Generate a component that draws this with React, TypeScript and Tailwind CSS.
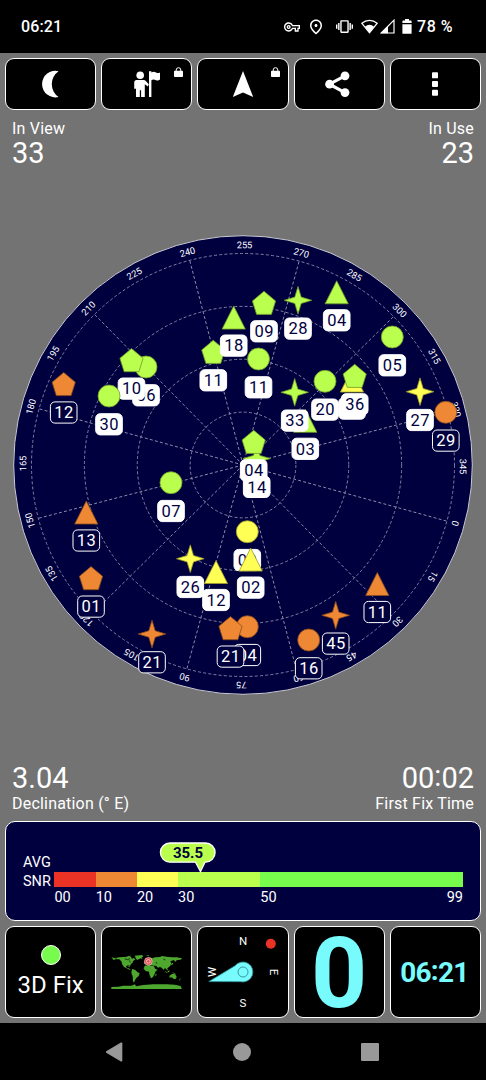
import type { ReactNode } from "react";
import { MdOutlinePlace, MdOutlineVpnKey, MdVibration } from "react-icons/md";

type Shape = "circle" | "pentagon" | "triangle" | "star";
type Tone = "lime" | "yellow" | "orange";

type Satellite = {
  id: string;
  shape: Shape;
  tone: Tone;
  x: number;
  y: number;
};

const CX = 243;
const CY = 240;
const RING = 211.5;

const TONES: Record<Tone, { fill: string; stroke: string }> = {
  lime: { fill: "#bbff4e", stroke: "#6f9a2a" },
  yellow: { fill: "#ffff55", stroke: "#9c9a2c" },
  orange: { fill: "#ee8834", stroke: "#8a4d1b" },
};

// painted in order, later ones cover earlier ones
const satellites: Satellite[] = [
  { id: "16", shape: "circle", tone: "orange", x: 308.7, y: 415 },
  { id: "45", shape: "star", tone: "orange", x: 335.7, y: 390.3 },
  { id: "11", shape: "triangle", tone: "orange", x: 377.3, y: 358.7 },
  { id: "04", shape: "circle", tone: "orange", x: 247.3, y: 401.7 },
  { id: "21", shape: "pentagon", tone: "orange", x: 230.5, y: 403.3 },
  { id: "21", shape: "star", tone: "orange", x: 152, y: 409 },
  { id: "01", shape: "pentagon", tone: "orange", x: 91, y: 353.3 },
  { id: "13", shape: "triangle", tone: "orange", x: 86.3, y: 287.2 },
  { id: "12", shape: "pentagon", tone: "orange", x: 63.7, y: 159.2 },
  { id: "29", shape: "circle", tone: "orange", x: 445.8, y: 187.3 },
  { id: "09", shape: "circle", tone: "yellow", x: 247.3, y: 306.7 },
  { id: "02", shape: "triangle", tone: "yellow", x: 250.7, y: 334.3 },
  { id: "26", shape: "star", tone: "yellow", x: 190.3, y: 333.7 },
  { id: "12", shape: "triangle", tone: "yellow", x: 216, y: 346.7 },
  { id: "27", shape: "star", tone: "yellow", x: 420, y: 166.7 },
  { id: "13", shape: "triangle", tone: "yellow", x: 352, y: 155.3 },
  { id: "36", shape: "pentagon", tone: "lime", x: 354.7, y: 151 },
  { id: "20", shape: "circle", tone: "lime", x: 325, y: 156.3 },
  { id: "03", shape: "triangle", tone: "lime", x: 305.3, y: 195.5 },
  { id: "33", shape: "star", tone: "lime", x: 294.7, y: 167.3 },
  { id: "05", shape: "circle", tone: "lime", x: 392.3, y: 112 },
  { id: "04", shape: "triangle", tone: "lime", x: 336.7, y: 67 },
  { id: "28", shape: "star", tone: "lime", x: 298, y: 75.3 },
  { id: "09", shape: "pentagon", tone: "lime", x: 264, y: 78 },
  { id: "11", shape: "circle", tone: "lime", x: 258.5, y: 134 },
  { id: "11", shape: "pentagon", tone: "lime", x: 213.3, y: 127 },
  { id: "18", shape: "triangle", tone: "lime", x: 233.7, y: 92.3 },
  { id: "06", shape: "circle", tone: "lime", x: 146, y: 142 },
  { id: "10", shape: "pentagon", tone: "lime", x: 131.5, y: 135.3 },
  { id: "30", shape: "circle", tone: "lime", x: 109, y: 171 },
  { id: "07", shape: "circle", tone: "lime", x: 171, y: 257.7 },
  { id: "14", shape: "star", tone: "lime", x: 256.7, y: 233.6 },
  { id: "04", shape: "pentagon", tone: "lime", x: 253.7, y: 217 },
];

const azimuths = Array.from({ length: 24 }, (_, i) => i * 15);

function Marker({ shape, tone }: { shape: Shape; tone: Tone }) {
  const paint = { ...TONES[tone], strokeWidth: 0.8 };
  if (shape === "circle") return <circle r="11" {...paint} />;
  if (shape === "pentagon") {
    return <path d="M0 -11.7 L11.6 -2 L7.4 11.4 H-7.4 L-11.6 -2 Z" {...paint} />;
  }
  if (shape === "triangle") {
    return <path d="M0 -11.2 L11.6 11.8 H-11.6 Z" {...paint} />;
  }
  return (
    <path
      d="M0 -13.8 L3.2 -3.2 L13.8 0 L3.2 3.2 L0 13.8 L-3.2 3.2 L-13.8 0 L-3.2 -3.2 Z"
      {...paint}
    />
  );
}

function SkyPlot() {
  return (
    <svg viewBox="0 0 486 480" className="block h-[480px] w-[486px]">
      <circle cx={CX} cy={CY} r="229.3" fill="#00003f" stroke="#c9c9d2" strokeWidth="1" />
      <g fill="none" stroke="#8d8dac" strokeWidth="0.9" strokeDasharray="3 2.2">
        {[1, 2, 3, 4].map((n) => (
          <circle key={n} cx={CX} cy={CY} r={(RING * n) / 4} />
        ))}
        {azimuths
          .filter((a) => a % 30 === 0)
          .map((a) => (
            <line
              key={a}
              x1={CX}
              y1={CY}
              x2={CX}
              y2={CY - RING}
              transform={`rotate(${a - 254.6} ${CX} ${CY})`}
            />
          ))}
      </g>
      <g fill="#ffffff" fontSize="9.3" textAnchor="middle">
        {azimuths.map((a) => (
          <text key={a} x={CX} y={CY - 216.8} transform={`rotate(${a - 254.6} ${CX} ${CY})`}>
            {a}
          </text>
        ))}
      </g>
      {satellites.map((s, i) => {
        const used = s.tone !== "orange";
        return (
          <g key={i} transform={`translate(${s.x} ${s.y})`}>
            <Marker shape={s.shape} tone={s.tone} />
            <rect
              x="-13.3"
              y="17.7"
              width="26.6"
              height="21.2"
              rx="4.5"
              fill={used ? "#ffffff" : "#00003f"}
              stroke="#ffffff"
              strokeWidth="1"
            />
            <text
              x="0.3"
              y="34.1"
              fontSize="16.5"
              letterSpacing="0.6"
              textAnchor="middle"
              fill={used ? "#00003f" : "#ffffff"}
            >
              {s.id}
            </text>
          </g>
        );
      })}
    </svg>
  );
}

function StatusBar() {
  return (
    <div className="flex h-[53px] shrink-0 items-center bg-black pl-[21px] pr-[33px] text-[16px] font-medium">
      <span className="tracking-[0.1px]">06:21</span>
      <div className="ml-auto flex items-center">
        <MdOutlineVpnKey size={16} />
        <MdOutlinePlace size={18} className="ml-[7px]" />
        <MdVibration size={17} className="ml-[11px]" />
        <svg viewBox="0 0 17 15" className="ml-2 h-[15px] w-[17px]">
          <path d="M.9 4.3 A11.6 11.6 0 0 1 16.1 4.3 L8.5 13.8 Z" fill="none" stroke="#fff" strokeWidth="1.3" />
          <path d="M3.8 7.7 A7.4 7.4 0 0 1 13.2 7.7 L8.5 14 Z" fill="#fff" />
        </svg>
        <svg viewBox="0 0 15 15" className="ml-[2px] h-[15px] w-[15px]">
          <path d="M1.2 14 L14 1.2 V14 Z" fill="none" stroke="#fff" strokeWidth="1.2" />
          <path d="M1 14.2 L8 7 V14.2 Z" fill="#fff" />
        </svg>
        <svg viewBox="0 0 10 15" className="ml-[7px] h-[15px] w-[10px]">
          <path d="M3 0 H7 V1.6 H9 Q9.6 1.6 9.6 2.2 V4 H.4 V2.2 Q.4 1.6 1 1.6 H3 Z" fill="#fff" />
          <path d="M.4 5.3 H9.6 V14.2 Q9.6 14.8 9 14.8 H1 Q.4 14.8 .4 14.2 Z" fill="#fff" />
        </svg>
        <span className="ml-[5px] tracking-[0.5px]">78 %</span>
      </div>
    </div>
  );
}

function Lock() {
  return (
    <svg viewBox="0 0 9 10" className="absolute right-[8px] top-[8px] h-[10px] w-[9px]">
      <rect x="0" y="3.8" width="9" height="6.2" rx="0.8" fill="#fff" />
      <path d="M2.2 4.5 V3 A2.3 2.3 0 0 1 6.8 3 V4.5" fill="none" stroke="#fff" strokeWidth="1" />
    </svg>
  );
}

function ToolButton({ children, locked }: { children: ReactNode; locked?: boolean }) {
  return (
    <button className="relative flex items-center justify-center rounded-[9px] border border-white bg-black">
      <svg viewBox="0 0 28 28" className="h-7 w-7" fill="#fff">
        {children}
      </svg>
      {locked && <Lock />}
    </button>
  );
}

function Toolbar() {
  return (
    <div className="mx-[5px] mt-[5px] grid h-[52px] shrink-0 grid-cols-5 gap-[5px]">
      <ToolButton>
        <path d="M21.6 1.2 A13.3 13.3 0 1 0 21.6 27 A15.6 15.6 0 0 1 21.6 1.2 Z" />
      </ToolButton>
      <ToolButton locked>
        <circle cx="7.2" cy="5.2" r="3.8" />
        <path d="M3.6 10 H10.6 Q12 10 12.8 11 L15.8 14.2 L14.9 16.4 L11.8 14.2 V27 H8.1 V20.2 H6.8 V27 H3 V18.8 H1.2 V13 Q1.2 10 3.6 10 Z" />
        <path d="M16 1.3 H18.4 V2.4 Q21 .9 23 2.4 Q25 3.6 27 2.4 V9.6 Q25 11.2 22.6 10 Q20.3 8.8 18.4 10.2 V27 H16 Z" />
      </ToolButton>
      <ToolButton locked>
        <path d="M14 1 L24.2 27 L14 22.6 L3.8 27 Z" />
      </ToolButton>
      <ToolButton>
        <path d="M20 5.8 L4.4 14.2 L20 22.6" fill="none" stroke="#fff" strokeWidth="3.2" />
        <circle cx="4.6" cy="14.2" r="4.4" />
        <circle cx="20" cy="5.8" r="4.4" />
        <circle cx="20" cy="22.6" r="4.4" />
      </ToolButton>
      <ToolButton>
        <rect x="11" y="2.3" width="6" height="6" rx="0.9" />
        <rect x="11" y="11" width="6" height="6" rx="0.9" />
        <rect x="11" y="19.7" width="6" height="6" rx="0.9" />
      </ToolButton>
    </div>
  );
}

const segments = [
  { label: "00", box: "w-[41.3px]", color: "bg-[#ea3324]" },
  { label: "10", box: "w-[41.2px]", color: "bg-[#ee8834]" },
  { label: "20", box: "w-[41.2px]", color: "bg-[#ffff55]" },
  { label: "30", box: "w-[82.3px]", color: "bg-[#bbff4e]" },
  { label: "50", box: "flex-1", color: "bg-[#77fb4c]" },
];

function SnrPanel() {
  return (
    <div className="relative mx-[5px] mt-[7px] h-[100px] shrink-0 rounded-[10px] border-[1.5px] border-white bg-[#00003f] pl-[17px] pr-[17px] pt-[31px] text-[14.5px] leading-[18px]">
      <div className="flex">
        <div className="w-[31.4px] pt-px leading-[18.5px]">
          <div>AVG</div>
          <div>SNR</div>
        </div>
        <div className="flex flex-1 pt-[19px]">
          {segments.map((s) => (
            <div key={s.label} className={s.box}>
              <div className={`h-[14.5px] ${s.color}`} />
              <div className="flex justify-between pt-[2px]">
                <span>{s.label}</span>
                {s.label === "50" && <span>99</span>}
              </div>
            </div>
          ))}
        </div>
      </div>
      <div className="absolute left-[153px] top-[20px] h-[32px] w-[58px]">
        <svg viewBox="0 0 58 32" className="absolute inset-0 h-[32px] w-[58px]">
          <path
            d="M11 1 H46.5 A9.6 9.6 0 0 1 46.5 20.2 H46 L41.5 29.5 L36.5 20.2 H11 A9.6 9.6 0 0 1 11 1 Z"
            fill="#bbff4e"
            stroke="#fff"
            strokeWidth="1.3"
          />
        </svg>
        <div className="relative text-center text-[15px] font-bold leading-[22px] text-[#00003f]">35.5</div>
      </div>
    </div>
  );
}

function WorldMap() {
  return (
    <svg viewBox="33 92 213 103" className="h-[34.4px] w-[71px]">
      <g fill="#4ea72e">
        <path d="M34 99 L44 101 L58 99 L70 98 L80 97 L92 98 L96 101 L94 104 L102 101 L106 106 L99 110 L98 115 L93 119 L90 125 L84 123 L78 126 L80 130 L86 132 L92 136 L90 137 L80 132 L72 128 L66 119 L65 112 L58 105 L46 105 L40 107 L37 102 Z" />
        <path d="M82 95 L93 94 L91 97 L83 98 Z" />
        <path d="M104 94 L126 92 L130 96 L124 101 L116 105 L111 107 L107 101 Z" />
        <path d="M82 125 L91 127 L90 129 L84 127 Z" />
        <path d="M96 134 L105 136 L112 143 L119 147 L116 155 L109 161 L105 168 L102 175 L99 171 L98 156 L94 146 Z" />
        <path d="M131 115 L137 109 L141 104 L149 99 L157 102 L165 99 L180 98 L186 95 L200 97 L215 99 L230 99 L246 102 L242 106 L231 107 L225 113 L222 107 L211 111 L214 116 L211 124 L206 129 L202 132 L204 139 L199 135 L195 131 L190 137 L186 131 L180 128 L174 130 L168 124 L160 124 L152 121 L147 119 L141 118 L134 120 Z" />
        <path d="M134 124 L148 122 L162 126 L166 134 L173 136 L166 142 L164 149 L159 158 L153 162 L149 153 L147 142 L137 140 L131 133 Z" />
        <path d="M167 148 L170 149 L168 156 L166 154 Z" />
        <path d="M193 139 L200 143 L204 146 L199 145 Z M203 140 L208 138 L208 143 L204 144 Z M216 144 L225 147 L228 150 L219 147 Z" />
        <path d="M208 154 L216 149 L225 149 L230 157 L228 163 L221 164 L215 159 L209 160 Z" />
        <path d="M239 164 L243 162 L239 168 L236 170 Z" />
        <path d="M213 119 L219 115 L220 119 L214 123 Z" />
        <path d="M121 102 L127 102 L126 105 Z M138 93 L148 93 L145 96 Z" />
        <path d="M34 188 L55 187 L70 184 L94 184 L105 180 L108 186 L130 182 L160 180 L200 180 L225 181 L242 185 L246 195 L34 195 Z" />
      </g>
      <path d="M46 101 L50 103 M74 103 L82 106 L90 103 M88 108 L91 114 M168 113 L171 118 M145 109 L150 111 M190 104 L196 107" stroke="#000" strokeWidth="2" fill="none" />
      <circle cx="145" cy="111" r="11.5" fill="#e0474f" stroke="#ffd9dc" strokeWidth="1.8" />
      <circle cx="145" cy="111" r="5.5" fill="#e0474f" stroke="#ffd9dc" strokeWidth="2.6" />
    </svg>
  );
}

function Compass() {
  return (
    <svg viewBox="0 0 90 90" className="h-[90px] w-[90px]">
      <g fill="#fff" fontSize="11.5" textAnchor="middle">
        <text x="45" y="18.2">N</text>
        <text x="45" y="80.4">S</text>
        <text transform="translate(18.3 45) rotate(-90)">W</text>
        <text transform="translate(71.8 45) rotate(90)">E</text>
      </g>
      <circle cx="72.8" cy="16.7" r="5" fill="#ea3324" />
      <path
        d="M10.8 54.6 L37 38.8 A10 10 0 1 1 42.5 54.7 Z"
        fill="#77fbfd"
        stroke="#2f8f96"
        strokeWidth="0.8"
      />
      <circle cx="45" cy="45" r="5" fill="none" stroke="#3a9ba3" strokeWidth="1" />
    </svg>
  );
}

function Tile({ children }: { children: ReactNode }) {
  return (
    <div className="flex flex-col items-center justify-center rounded-[9px] border border-white bg-black">
      {children}
    </div>
  );
}

function Tiles() {
  return (
    <div className="mx-[5px] mt-[5px] grid h-[92px] shrink-0 grid-cols-5 gap-[5px]">
      <Tile>
        <div className="h-5 w-5 rounded-full border-[1.5px] border-white bg-[#77fb4c]" />
        <div className="mt-[6px] text-[24px] leading-[28px]">3D Fix</div>
      </Tile>
      <Tile>
        <WorldMap />
      </Tile>
      <Tile>
        <Compass />
      </Tile>
      <Tile>
        <div className="pt-[3px] text-[98px] font-bold leading-[87px] text-[#77fbfd]">0</div>
      </Tile>
      <Tile>
        <div className="pr-[2px] text-[28px] font-bold leading-[32px] tracking-[-0.8px] text-[#77fbfd]">
          06<span className="align-[2px]">:</span>21
        </div>
      </Tile>
    </div>
  );
}

function NavBar() {
  return (
    <div className="mt-[5px] flex h-[57px] shrink-0 items-center bg-black pl-[105px] pr-[107px]">
      <svg viewBox="0 0 18 20" className="h-[20px] w-[18px]" fill="#999">
        <path d="M16 .6 Q17.3 0 17.3 1.2 V18.8 Q17.3 20 16 19.4 L1.2 10.7 Q.4 10 1.2 9.3 Z" />
      </svg>
      <div className="mx-auto h-[18px] w-[18px] rounded-full bg-[#999]" />
      <div className="h-[18px] w-[18px] rounded-[1px] bg-[#999]" />
    </div>
  );
}

export default function App() {
  return (
    <div className="flex h-[1080px] w-[486px] flex-col overflow-hidden bg-[#737373] font-['Roboto',sans-serif] text-white">
      <StatusBar />
      <Toolbar />

      <div className="flex h-[115px] shrink-0 justify-between px-[12px] pt-[9px]">
        <div>
          <div className="text-[16px] leading-[19px] tracking-[0.2px]">In View</div>
          <div className="text-[29px] leading-[30px]">33</div>
        </div>
        <div className="text-right">
          <div className="text-[16px] leading-[19px] tracking-[0.2px]">In Use</div>
          <div className="text-[29px] leading-[30px]">23</div>
        </div>
      </div>

      <SkyPlot />

      <div className="flex h-[109px] shrink-0 items-end justify-between px-[12px] pb-px">
        <div>
          <div className="text-[29px] leading-[31px]">3.04</div>
          <div className="text-[16px] leading-[19px] tracking-[0.2px]">Declination (° E)</div>
        </div>
        <div className="text-right">
          <div className="text-[29px] leading-[31px]">
            00<span className="align-[2px]">:</span>02
          </div>
          <div className="text-[16px] leading-[19px] tracking-[0.2px]">First Fix Time</div>
        </div>
      </div>

      <SnrPanel />
      <Tiles />
      <NavBar />
    </div>
  );
}
